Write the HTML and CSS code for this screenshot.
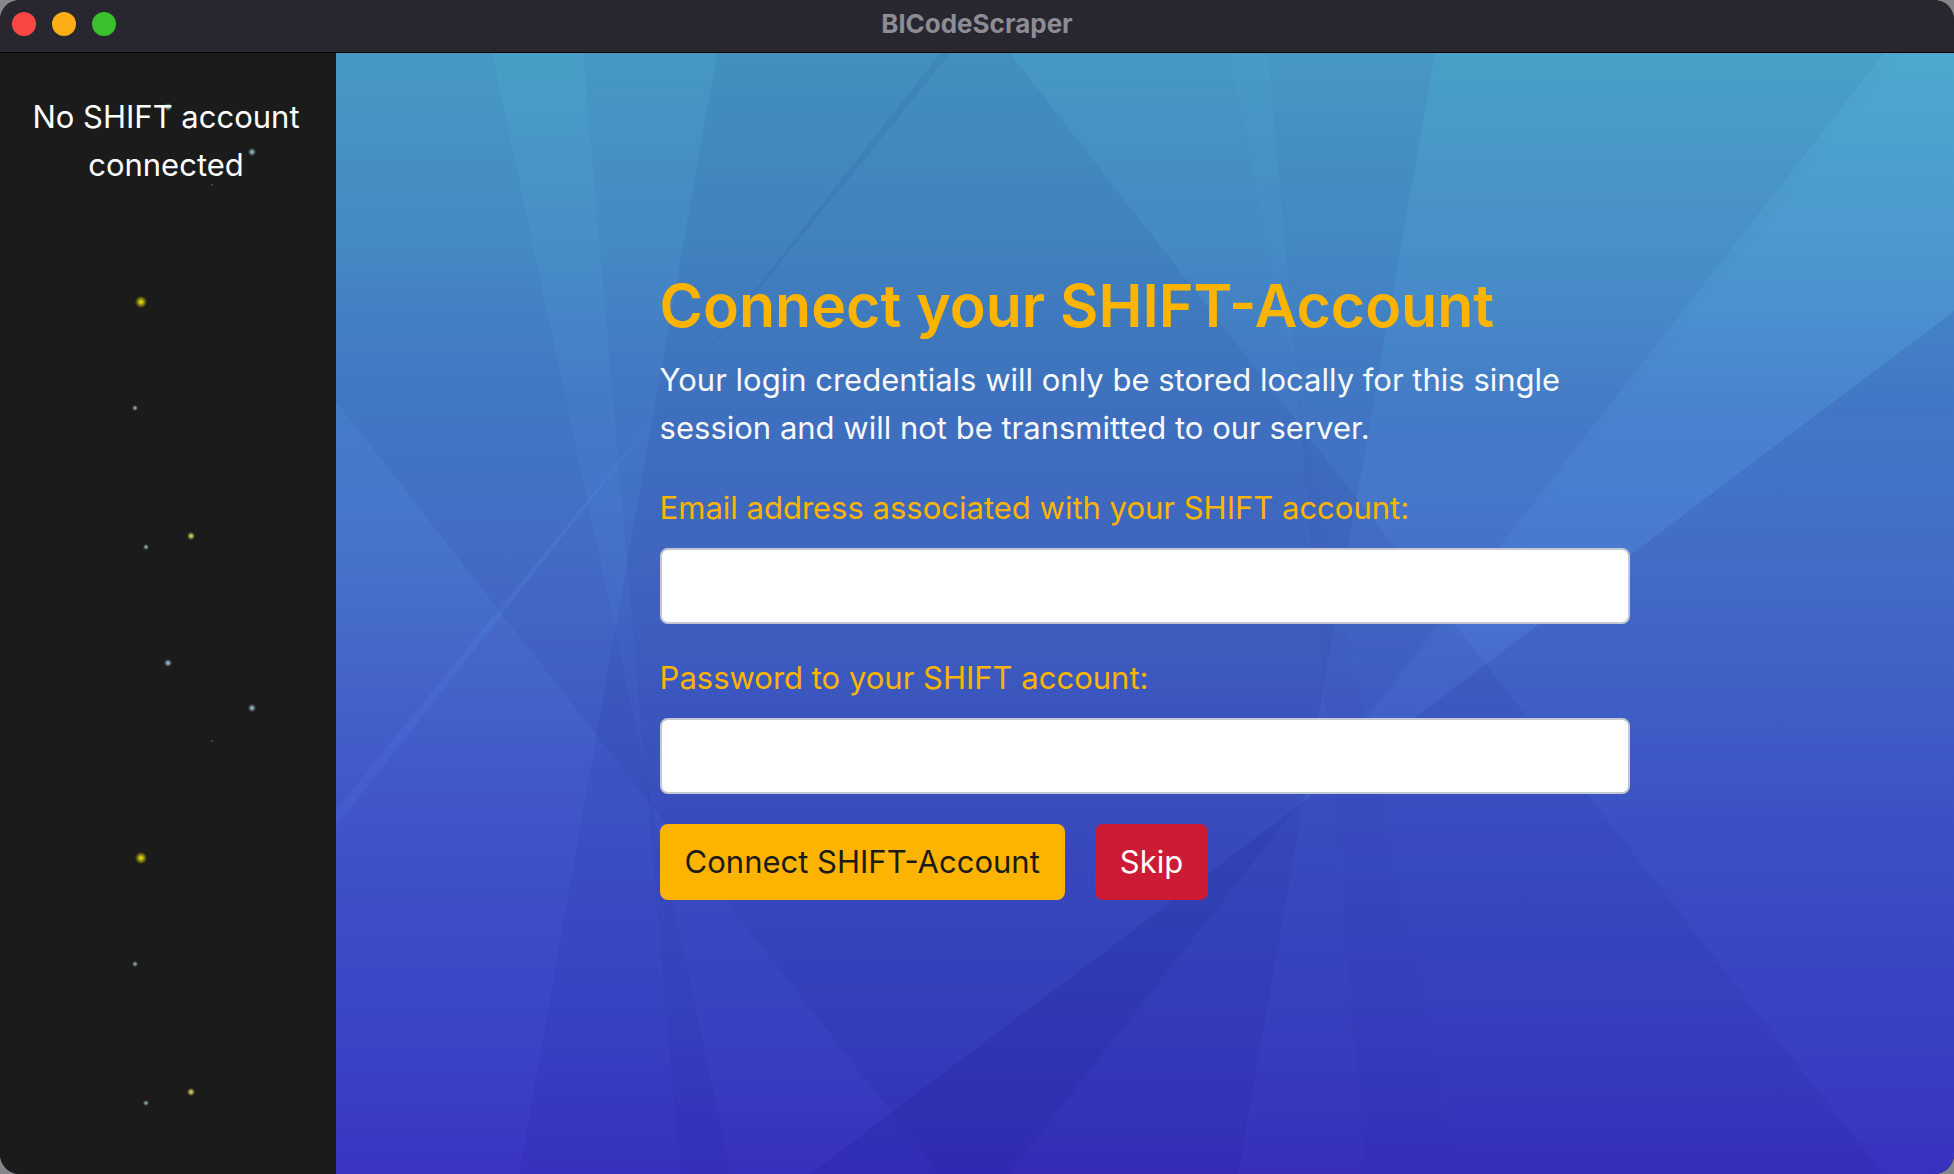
FILE: index.html
```html
<!DOCTYPE html>
<html lang="en">
<head>
<meta charset="utf-8">
<title>BlCodeScraper</title>
<link rel="stylesheet" href="styles.css">
</head>
<body>
<div class="window">
  <header class="titlebar">
    <div class="controls">
      <button class="control close" type="button" aria-label="Close"></button>
      <button class="control minimize" type="button" aria-label="Minimize"></button>
      <button class="control zoom" type="button" aria-label="Zoom"></button>
    </div>
    <div class="title">BlCodeScraper</div>
  </header>
  <div class="layout">
    <aside class="sidebar">
      <p class="status">No SHIFT account connected</p>
    </aside>
    <main class="main">
      <svg class="backdrop" viewBox="0 0 1618 1121" preserveAspectRatio="none" aria-hidden="true">
        <g fill="#000060">
          <!-- shade to the right of each edge -->
          <path fill-opacity=".03" d="M247 0H1618V1121H344Z"/>
          <path fill-opacity=".05" d="M381 0H1618V1121H183Z"/>
          <path fill-opacity=".05" d="M-272 0H1618V1121H603Z"/>
          <path fill-opacity=".05" d="M604 0H1618V1121H-271Z"/>
          <path fill-opacity=".09" d="M1618 258V1121H474Z"/>
          <path fill-opacity=".02" d="M932 0H1618V1121H1030Z"/>
          <!-- shade to the left of each edge -->
          <path fill-opacity=".03" d="M156 0H0V1121H395Z"/>
          <path fill-opacity=".05" d="M615 0H-296V1121Z"/>
          <path fill-opacity=".05" d="M674 0H0V1121H1547Z"/>
          <path fill-opacity=".05" d="M1099 0H0V1121H902Z"/>
          <path fill-opacity=".04" d="M1548 0H0V1121H674Z"/>
          <path fill-opacity=".01" d="M1567 0H0V1121H667Z"/>
          <path fill-opacity=".01" d="M893 0H0V1121H1123Z"/>
        </g>
      </svg>
      <form class="form">
        <h1 class="heading">Connect your SHIFT-Account</h1>
        <p class="intro">Your login credentials will only be stored locally for this single session and will not be transmitted to our server.</p>
        <div class="field">
          <label for="email">Email address associated with your SHIFT account:</label>
          <input id="email" type="email">
        </div>
        <div class="field">
          <label for="password">Password to your SHIFT account:</label>
          <input id="password" type="password">
        </div>
        <div class="actions">
          <button class="btn primary" type="submit">Connect SHIFT-Account</button>
          <button class="btn danger" type="button">Skip</button>
        </div>
      </form>
    </main>
  </div>
</div>
</body>
</html>
```
FILE: styles.css
```css
* { box-sizing: border-box; }

body {
  margin: 0;
  background: #85868a;
  font-family: Inter, "Liberation Sans", sans-serif;
  font-size: 31px;
  line-height: 48px;
}

h1, p { margin: 0; }

.window {
  display: flex;
  flex-direction: column;
  min-height: 100vh;
  overflow: hidden;
  border-radius: 20px;
  background: #1b1b1b;
}

.titlebar {
  display: grid;
  grid-template-columns: 1fr auto 1fr;
  align-items: center;
  height: 53px;
  padding: 0 12px 4px;
  border-bottom: 1px solid #000;
  background: #28272f;
}

.controls { display: flex; gap: 16px; }

.control {
  width: 24px;
  height: 24px;
  padding: 0;
  border: 0;
  border-radius: 50%;
}

.close { background: #fa4644; }
.minimize { background: #fdae17; }
.zoom { background: #39c12b; }

.title {
  color: #8d8c95;
  font-size: 26px;
  font-weight: 700;
}

.layout { display: flex; flex: 1; }

.sidebar {
  flex: 0 0 336px;
  padding: 40px 28px 40px 24px;
  background-color: #1b1b1b;
  background-image:
    radial-gradient(circle at 141px 249px, #ffee00 0, #b5ad0c 2px, transparent 6px),
    radial-gradient(circle at 135px 355px, #9fc0c4 0, transparent 3px),
    radial-gradient(circle at 191px 483px, #eee86a 0, #8f8b45 2px, transparent 4px),
    radial-gradient(circle at 146px 494px, #a5c4cc 0, transparent 3px),
    radial-gradient(circle at 168px 54px, #a9d4df 0, transparent 4px),
    radial-gradient(circle at 252px 99px, #b0d4e2 0, transparent 4px),
    radial-gradient(circle at 212px 132px, #a0a0a0 0, transparent 1px);
  background-size: 100% 556px;
}

.status {
  color: #fff;
  text-align: center;
}

.main {
  position: relative;
  flex: 1;
  display: flex;
  align-items: center;
  justify-content: center;
  background: linear-gradient(#63d3eb, #5fbdeb 18%, #5da6ea 31%, #5e97ee 45%, #546fe8 70%, #505ae6 88%, #4f47e4);
}

.backdrop {
  position: absolute;
  inset: 0;
  width: 100%;
  height: 100%;
}

.form {
  position: relative;
  width: 60%;
  padding-bottom: 60px;
}

.heading {
  margin-bottom: 12px;
  color: #fdb400;
  font-size: 59px;
  font-weight: 600;
  line-height: 76px;
}

.intro {
  margin-bottom: 32px;
  color: #f8f9fa;
}

.field { margin-bottom: 30px; }

.field label {
  display: block;
  margin-bottom: 16px;
  color: #fdb400;
}

.field input {
  display: block;
  width: 100%;
  height: 76px;
  padding: 12px 24px;
  border: 2px solid #c3c8d2;
  border-radius: 8px;
  background: #fff;
  font: inherit;
}

.actions { display: flex; gap: 30px; }

.btn {
  height: 76px;
  padding: 0 25px;
  border: 0;
  border-radius: 8px;
  font: inherit;
}

.primary { background: #fdb400; color: #1b1b1b; }
.danger { background: #cd1b36; color: #fff; }
```
